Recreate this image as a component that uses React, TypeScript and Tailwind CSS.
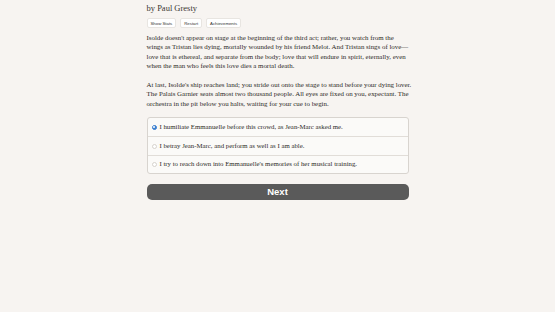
import * as React from 'react';
import { useState } from 'react';

const PARA1 = [
  "Isolde doesn't appear on stage at the beginning of the third act; rather, you watch from the",
  'wings as Tristan lies dying, mortally wounded by his friend Melot. And Tristan sings of love—',
  'love that is ethereal, and separate from the body; love that will endure in spirit, eternally, even',
  'when the man who feels this love dies a mortal death.',
];

const PARA2 = [
  "At last, Isolde's ship reaches land; you stride out onto the stage to stand before your dying lover.",
  'The Palais Garnier seats almost two thousand people. All eyes are fixed on you, expectant. The',
  'orchestra in the pit below you halts, waiting for your cue to begin.',
];

const CHOICES = [
  'I humiliate Emmanuelle before this crowd, as Jean-Marc asked me.',
  'I betray Jean-Marc, and perform as well as I am able.',
  "I try to reach down into Emmanuelle's memories of her musical training.",
];

export default function App() {
  const [picked, setPicked] = useState(0);

  return (
    <div className="min-h-[312px] w-full bg-[#f7f4f1] font-['Liberation_Serif',serif] text-[#2d2a27]">
      <div className="mx-auto w-[262px] pt-[3px]">
        <div className="text-[8.5px] leading-[11px] text-[#3a3632]">by Paul Gresty</div>

        {/* header buttons */}
        <div className="mt-[4px] flex gap-[4px] font-['Liberation_Sans',sans-serif] text-[4.3px] leading-[5px]">
          <button className="rounded-[2px] border border-[#e8e5e1] bg-white px-[3px] py-[1.5px] text-[#333]">Show Stats</button>
          <button className="rounded-[2px] border border-[#e8e5e1] bg-white px-[3px] py-[1.5px] text-[#333]">Restart</button>
          <button className="rounded-[2px] border border-[#e8e5e1] bg-white px-[3px] py-[1.5px] text-[#333]">Achievements</button>
        </div>

        <p className="mt-[5px] text-[6.9px] leading-[9.3px]">
          {PARA1.map((l, i) => (
            <span key={i} className="block whitespace-nowrap">{l}</span>
          ))}
        </p>
        <p className="mt-[10px] text-[6.9px] leading-[9.3px]">
          {PARA2.map((l, i) => (
            <span key={i} className="block whitespace-nowrap">{l}</span>
          ))}
        </p>

        {/* choices */}
        <div className="mt-[9px] overflow-hidden rounded-[3px] border border-[#d8d4cf] bg-[#fbfaf8]">
          {CHOICES.map((c, i) => (
            <label
              key={i}
              onClick={() => setPicked(i)}
              className={
                'flex h-[18.3px] cursor-pointer items-center gap-[3px] px-[4px] text-[6.8px] ' +
                (i > 0 ? 'border-t border-[#e1ddd8]' : '')
              }
            >
              <span
                className={
                  'flex h-[5px] w-[5px] items-center justify-center rounded-full border ' +
                  (picked === i ? 'border-[#3b7fd0] bg-[#3b7fd0]' : 'border-[#d6d2cd] bg-white')
                }
              >
                {picked === i && <span className="h-[2px] w-[2px] rounded-full bg-white" />}
              </span>
              <span>{c}</span>
            </label>
          ))}
        </div>

        <button className="mt-[10px] flex h-[16px] w-full items-center justify-center rounded-[5px] bg-[#5a5a5a] font-['Liberation_Sans',sans-serif] text-[9.5px] font-bold text-white">
          Next
        </button>
      </div>
    </div>
  );
}
